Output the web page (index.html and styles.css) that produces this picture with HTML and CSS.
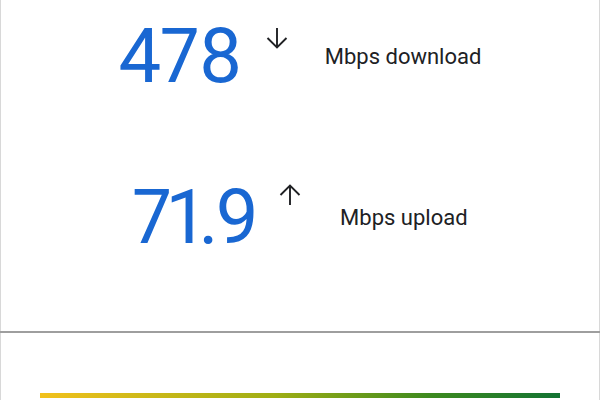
FILE: index.html
```html
<!DOCTYPE html>
<html>
<head>
<meta charset="utf-8">
<link rel="stylesheet" href="styles.css">
</head>
<body>
<div class="panel">
  <section class="results">
    <div class="row row-down">
      <span class="value">478</span>
      <svg class="arrow" viewBox="0 0 22 22" width="22" height="22"><path d="M11 1V20M1.5 11L11 20.5L20.5 11" fill="none" stroke="#202124" stroke-width="1.9"/></svg>
      <span class="label">Mbps download</span>
    </div>
    <div class="row row-up">
      <span class="value">71.9</span>
      <svg class="arrow" viewBox="0 0 22 22" width="22" height="22"><path d="M11 21V2M1.5 11L11 1.5L20.5 11" fill="none" stroke="#202124" stroke-width="1.9"/></svg>
      <span class="label">Mbps upload</span>
    </div>
  </section>
  <section class="meter">
    <div class="bar"></div>
  </section>
</div>
</body>
</html>
```
FILE: styles.css
```css
html, body {
  margin: 0;
  padding: 0;
  background: #fff;
  overflow: hidden;
}
body {
  font-family: Roboto, "Noto Sans", sans-serif;
  width: 600px;
  height: 400px;
}
.panel {
  height: 400px;
  border-left: 1px solid #d8d8d8;
  border-right: 1px solid #d8d8d8;
  box-sizing: border-box;
}
.results {
  height: 331px;
  box-sizing: border-box;
  padding-top: 18px;
  display: flex;
  flex-direction: column;
  gap: 84px;
}
.row {
  display: flex;
  justify-content: center;
  align-items: flex-start;
  height: 77px;
}
.value {
  font-size: 76px;
  line-height: 1;
  color: #1967d2;
  letter-spacing: -1px;
  font-variant-numeric: proportional-nums;
}
.row-up .value {
  letter-spacing: -3px;
}
.arrow {
  margin-top: 9px;
  margin-left: 24px;
  margin-right: 37px;
}
.row-up .arrow {
  margin-top: 5px;
  margin-left: 23px;
  margin-right: 39px;
}
.label {
  margin-top: 28px;
  font-size: 22px;
  line-height: 1;
  color: #202124;
}
.meter {
  border-top: 2px solid #9e9e9e;
  margin-left: -1px;
  margin-right: -1px;
  padding: 60px 40px 0;
}
.bar {
  height: 5px;
  background: linear-gradient(to right, #f2c11c, #9fae14 45%, #3d8a1f 75%, #137333);
}
```
